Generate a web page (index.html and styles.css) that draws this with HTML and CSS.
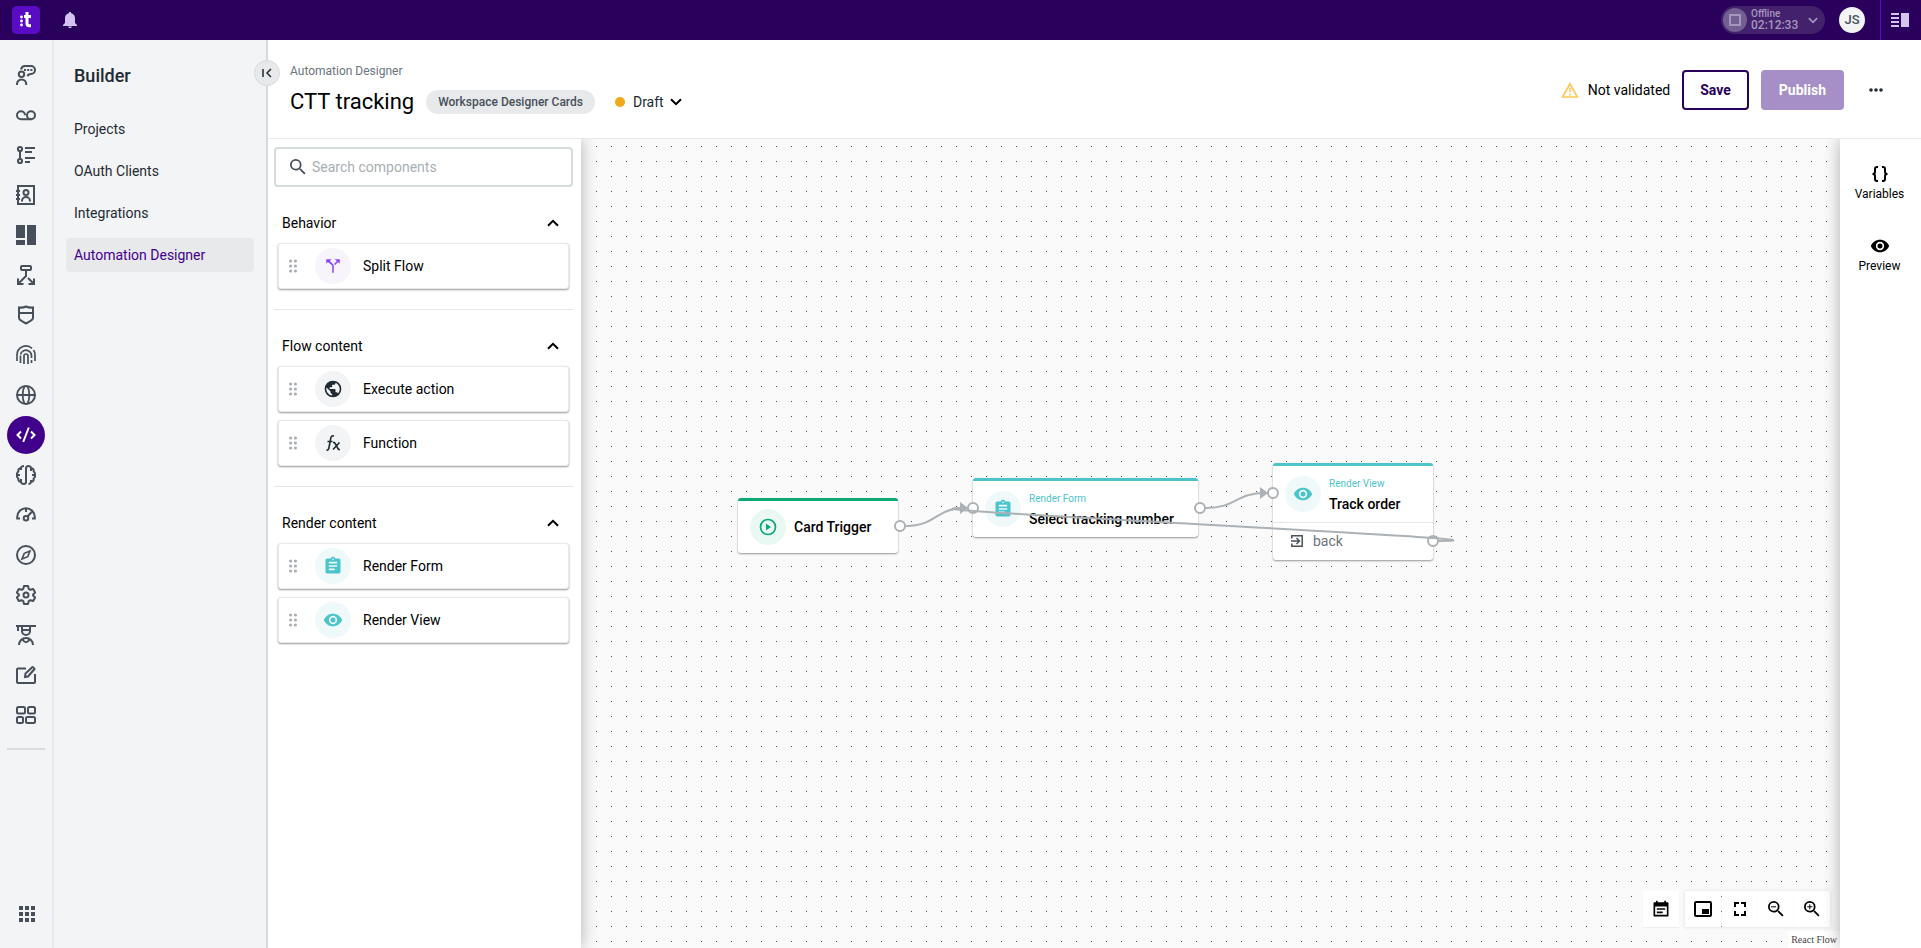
FILE: index.html
```html
<!DOCTYPE html>
<html lang="en">
<head>
<meta charset="utf-8">
<title>Automation Designer</title>
<meta name="viewport" content="width=device-width, initial-scale=1">
<link rel="stylesheet" href="styles.css">
</head>
<body>
<svg class="defs" width="0" height="0" aria-hidden="true">
  <defs>
    <symbol id="grip" viewBox="0 0 8 14"><g fill="#a9afb4"><circle cx="1.6" cy="2" r="1.6"/><circle cx="6.400" cy="2" r="1.6"/><circle cx="1.6" cy="7" r="1.6"/><circle cx="6.400" cy="7" r="1.6"/><circle cx="1.6" cy="12" r="1.6"/><circle cx="6.400" cy="12" r="1.6"/></g></symbol>
    <symbol id="up" viewBox="0 0 12 8"><path d="M1 6.8 6 1.8l5 5" fill="none" stroke="currentColor" stroke-width="2"/></symbol>
    <symbol id="down" viewBox="0 0 12 8"><path d="M1 1.2l5 5 5-5" fill="none" stroke="currentColor" stroke-width="2"/></symbol>
    <symbol id="form" viewBox="0 0 24 24"><path fill="currentColor" d="M19 3h-4.18C14.4 1.84 13.3 1 12 1s-2.4.84-2.82 2H5a2 2 0 0 0-2 2v14c0 1.100.9 2 2 2h14a2 2 0 0 0 2-2V5a2 2 0 0 0-2-2zm-7 0a1 1 0 1 1 0 2 1 1 0 0 1 0-2zm2 14H7v-2h7v2zm3-4H7v-2h10v2zm0-4H7V7h10v2z"/></symbol>
    <symbol id="eye" viewBox="0 0 24 24"><path fill="currentColor" d="M12 4.500C7 4.500 2.730 7.610 1 12c1.730 4.390 6 7.500 11 7.500s9.270-3.110 11-7.500c-1.730-4.390-6-7.500-11-7.500zM12 17a5 5 0 1 1 0-10 5 5 0 0 1 0 10zm0-8a3 3 0 1 0 0 6 3 3 0 0 0 0-6z"/></symbol>
    <symbol id="search" viewBox="3 3 18 18"><path fill="currentColor" d="M15.500 14h-.79l-.28-.27A6.470 6.470 0 0 0 16 9.500 6.500 6.500 0 1 0 9.500 16c1.610 0 3.090-.59 4.230-1.570l.27.28v.79l5 4.990L20.490 19l-4.990-5zm-6 0a4.500 4.500 0 1 1 0-9 4.500 4.500 0 0 1 0 9z"/></symbol>
  </defs>
</svg>

<header class="topbar">
  <a class="logo" href="#" aria-label="Home"><svg width="28" height="28" viewBox="0 0 28 28"><rect width="28" height="28" rx="5" fill="#5a0bc4"/><g fill="#fff"><circle cx="9.500" cy="11" r="1.400"/><circle cx="9.500" cy="15" r="1.400"/><circle cx="9.500" cy="19" r="1.400"/></g><path d="M15 6v11.500q0 2.300 2.300 2.300H19M12 10.500H19" fill="none" stroke="#fff" stroke-width="3"/></svg></a>
  <button class="bell" aria-label="Notifications"><svg width="14" height="16" viewBox="0 0 14 16"><path fill="#d2c3ef" d="M7 0c.8 0 1.200.5 1.200 1.300C10.700 1.800 12 3.700 12 6.200V11l2 2v1H0v-1l2-2V6.200c0-2.500 1.300-4.400 3.800-4.900C5.800.5 6.200 0 7 0zM5.200 14.500h3.600C8.800 15.500 8 16 7 16s-1.800-.5-1.800-1.500z"/></svg></button>
  <button class="status">
    <span class="status-dot"><svg width="12" height="12"><rect x="1" y="1" width="10" height="10" fill="none" stroke="#a596c0" stroke-width="2"/></svg></span>
    <span class="status-text"><span class="status-name">Offline</span><span class="status-time">02:12:33</span></span>
    <svg width="10" height="7" viewBox="0 0 12 8"><use href="#down"/></svg>
  </button>
  <button class="avatar">JS</button>
  <button class="panel-toggle" aria-label="Toggle panel"><svg width="18" height="14"><path d="M0 1h8M0 5h8M0 9h8M0 13h8" stroke="#d2c3ef" stroke-width="2"/><rect x="10" width="8" height="14" fill="#d2c3ef"/></svg></button>
</header>

<div class="shell">
  <nav class="rail" aria-label="Apps">
    <a href="#" aria-label="Conversations"><svg viewBox="0 0 20 20"><path d="M5 4.500C5.500 2 7 1 9 1h6a4 4 0 0 1 0 8q-3 0-3.500 2.300M1 20v-1a4.600 4.600 0 0 1 9.200 0v1"/><circle cx="5.500" cy="9.300" r="2.700"/><path d="M8 5h2M11.200 5h2M14.400 5h2" stroke-width="1.800"/></svg></a>
    <a href="#" aria-label="Voicemail"><svg viewBox="0 0 20 20"><path d="M9 10.300a4 4 0 1 0-4 4h10.500"/><circle cx="15" cy="10.300" r="4"/></svg></a>
    <a href="#" aria-label="Routing"><svg viewBox="0 0 20 20"><circle cx="4" cy="4" r="2.100"/><circle cx="4" cy="16" r="2.100"/><path d="M4 6.500v7M9 3h10M9 7h7M9 13h10M9 17h5"/></svg></a>
    <a href="#" aria-label="Contacts"><svg viewBox="0 0 20 20"><path d="M2 1h16v18H2zM0 6h4M0 10h4M0 14h4M6 16.500V16a4 4 0 0 1 8 0v.5"/><circle cx="10" cy="7.500" r="2.500"/></svg></a>
    <a href="#" aria-label="Dashboards"><svg viewBox="0 0 20 20"><path class="solid" d="M0 0h9v13H0zM0 15h9v5H0zM11 0h9v20h-9z"/></svg></a>
    <a href="#" aria-label="Flows"><svg viewBox="0 0 20 20"><rect x="5" y="1" width="10" height="4" rx="1"/><path d="M10 5v6l-7.500 7.500M12 13l5.500 5.500M2 13.500V19h5.500M18 13.500V19h-5.500"/></svg></a>
    <a href="#" aria-label="Security"><svg viewBox="0 0 20 20"><path d="M3 2.500q4 .5 7-1 3 1.500 7 1V13q0 2-7 5.500Q3 15 3 13zM3 8h14"/></svg></a>
    <a href="#" aria-label="Identity"><svg viewBox="0 0 20 20"><path d="M1 16v-6a9 9 0 0 1 15-6.700M17.500 5q1.500 2 1.500 5v6M4.500 18v-7.500M6.500 6.500a5.500 5.500 0 0 1 9 4V13M15.500 15v3M8 19v-8a2 2 0 0 1 4 0v8M4.700 9.500q0-1.500 1.500-3" stroke-width="1.700"/></svg></a>
    <a href="#" aria-label="Web"><svg viewBox="0 0 20 20"><circle cx="10" cy="10" r="9"/><path d="M1 10h18M9 1C6 5 6 15 9 19M11 1c3 4 3 14 0 18" stroke-width="1.800"/></svg></a>
    <a href="#" aria-label="Builder" class="active"><svg viewBox="0 0 20 20"><path d="M5 6.500 1.500 10 5 13.500M15 6.500l3.500 3.500-3.500 3.500M12.800 2.500 7.200 17"/></svg></a>
    <a href="#" aria-label="AI"><svg viewBox="0 0 20 20"><path d="M10 17V3.500Q10 1 12.300 1T15 3q3 .3 2.700 3.500Q19.500 8 19 10q.5 2-1.300 3.500Q18 16.500 15 17q-.5 2-2.500 2M8 1Q5.500 1 5 3 2 3.300 2.300 6.500.5 8 1 10q-.5 2 1.300 3.500Q2 16.500 5 17q.5 2 2.700 2Q10 19 10 17M1 10h3M19 10h-3M5 3v2M15 3v3M5 17v-3M15 17v-2"/></svg></a>
    <a href="#" aria-label="Performance"><svg viewBox="0 0 20 20"><path d="M4 13.500H1.200V12a8.800 8.800 0 0 1 17.600 0v1.500H16M10 3v4M11.500 11.500 16.500 6"/><circle cx="10" cy="13.300" r="2.300"/></svg></a>
    <a href="#" aria-label="Explore"><svg viewBox="0 0 20 20"><circle cx="10" cy="10" r="9"/><path d="M14 6l-2.300 5.700L6 14l2.300-5.700z" stroke-width="1.700"/></svg></a>
    <a href="#" aria-label="Settings"><svg viewBox="0 0 20 20"><path d="M8 1h4l.7 2.800 1.700 1 2.800-.8 2 3.500-2.100 2v1l2.100 2-2 3.500-2.800-.8-1.700 1L12 19H8l-.7-2.800-1.700-1-2.800.8-2-3.500 2.100-2v-1l-2.100-2 2-3.500 2.800.8 1.700-1z" stroke-linejoin="round"/><circle cx="10" cy="10" r="2.500"/></svg></a>
    <a href="#" aria-label="Learning"><svg viewBox="0 0 20 20"><path d="M0 1h20M2 1v5M6 1v5a4 4 0 0 0 8 0V1M6 5h8M3 20a7 7 0 0 1 14 0M6.500 14.500q3.500 5.500 7 0"/></svg></a>
    <a href="#" aria-label="Notes"><svg viewBox="0 0 20 20"><path d="M10 3.500H2q-1 0-1 1V17q0 1 1 1h16q1 0 1-1V9M9 12l.5-3.500 7-6.500q1 0 2 2L12 11.500z"/></svg></a>
    <a href="#" aria-label="Widgets"><svg viewBox="0 0 20 20"><rect x="1" y="2" width="8" height="6.500" rx="1.500"/><rect x="12" y="2" width="7" height="6.500" rx="1.500"/><rect x="1" y="12" width="6" height="6" rx="1.500"/><rect x="10" y="12" width="9" height="6" rx="1.500"/></svg></a>
    <hr class="rail-line">
    <a href="#" aria-label="All apps" class="all-apps"><svg viewBox="0 0 20 20"><path class="solid" d="M3 2h4v4H3zM9 2h4v4H9zM15 2h4v4h-4zM3 8h4v4H3zM9 8h4v4H9zM15 8h4v4h-4zM3 14h4v4H3zM9 14h4v4H9zM15 14h4v4h-4z"/></svg></a>
  </nav>

  <aside class="sidebar">
    <h2>Builder</h2>
    <ul>
      <li><a href="#">Projects</a></li>
      <li><a href="#">OAuth Clients</a></li>
      <li><a href="#">Integrations</a></li>
      <li><a href="#" class="current">Automation Designer</a></li>
    </ul>
    <button class="collapse" aria-label="Collapse menu"><svg width="10" height="10"><path d="M1 1v8M9 1 5 5l4 4" fill="none" stroke="#1f2a33" stroke-width="1.500"/></svg></button>
  </aside>

  <main class="main">
    <header class="page-head">
      <div class="titles">
        <a class="crumb" href="#">Automation Designer</a>
        <div class="title-row">
          <h1>CTT tracking</h1>
          <span class="chip">Workspace Designer Cards</span>
          <button class="draft"><span class="dot"></span>Draft<svg width="12" height="8"><use href="#down"/></svg></button>
        </div>
      </div>
      <div class="actions">
        <span class="validation"><svg width="18" height="16" viewBox="0 0 18 16"><path d="M9 1.800 16.400 15H1.600z" fill="none" stroke="#ffc857" stroke-width="1.700"/><path d="M9 6v4M9 11.500v2" stroke="#ffc857" stroke-width="1.700"/></svg>Not validated</span>
        <button class="btn save">Save</button>
        <button class="btn publish">Publish</button>
        <button class="more" aria-label="More"><svg width="14" height="4"><g fill="#1f2a33"><circle cx="2" cy="2" r="1.800"/><circle cx="7" cy="2" r="1.800"/><circle cx="12" cy="2" r="1.800"/></g></svg></button>
      </div>
    </header>

    <div class="workspace">
      <section class="palette">
        <label class="search"><svg width="16" height="16"><use href="#search"/></svg><input type="text" placeholder="Search components" aria-label="Search components"></label>
        <section class="group">
          <button class="group-head">Behavior<svg width="12" height="8"><use href="#up"/></svg></button>
          <div class="item"><svg width="8" height="14"><use href="#grip"/></svg><span class="disc violet"><svg width="18" height="18" viewBox="0 0 24 24"><path fill="currentColor" d="M3 3h7L7.800 5.200l5.200 5.300V21h-2v-9.600L5.200 6.800 3 9zM14 3h7v6l-2.200-2.200-3.900 3.900-1.500-1.500 3.900-3.900z"/></svg></span>Split Flow</div>
        </section>
        <section class="group">
          <button class="group-head">Flow content<svg width="12" height="8"><use href="#up"/></svg></button>
          <div class="item"><svg width="8" height="14"><use href="#grip"/></svg><span class="disc gray"><svg width="20" height="20" viewBox="0 0 24 24"><path fill="currentColor" d="M12 2a10 10 0 1 0 0 20 10 10 0 0 0 0-20zm-1 17.930A7.990 7.990 0 0 1 4.210 10.210L9 15v1a2 2 0 0 0 2 2v1.930zm6.900-2.540A2 2 0 0 0 16 16h-1v-3a1 1 0 0 0-1-1H8v-2h2a1 1 0 0 0 1-1V7h2a2 2 0 0 0 2-2v-.41a7.990 7.990 0 0 1 2.900 12.800z"/></svg></span>Execute action</div>
          <div class="item"><svg width="8" height="14"><use href="#grip"/></svg><span class="disc gray"><svg width="16" height="18" viewBox="0 0 16 18"><path d="M1.500 16q2 .5 2.500-2.500L5.800 4Q6.300 1.300 9 2M2.500 7.500h5M8 8.500h1.500l4 7H15M14.500 8.500l-6.500 7" fill="none" stroke="currentColor" stroke-width="1.600"/></svg></span>Function</div>
        </section>
        <section class="group">
          <button class="group-head">Render content<svg width="12" height="8"><use href="#up"/></svg></button>
          <div class="item"><svg width="8" height="14"><use href="#grip"/></svg><span class="disc teal"><svg width="20" height="20"><use href="#form"/></svg></span>Render Form</div>
          <div class="item"><svg width="8" height="14"><use href="#grip"/></svg><span class="disc teal"><svg width="20" height="20"><use href="#eye"/></svg></span>Render View</div>
        </section>
      </section>

      <section class="canvas" aria-label="Flow">
        <svg class="layer" width="100%" height="100%"><defs><pattern id="dots" x="0" y="7" width="15" height="15" patternUnits="userSpaceOnUse"><rect width="1" height="1" fill="#4c4c52"/></pattern></defs><rect x="1" width="100%" height="100%" fill="url(#dots)"/></svg>

        <article class="node trigger"><div class="node-main"><span class="disc green"><svg width="18" height="18" viewBox="0 0 18 18"><circle cx="9" cy="9" r="7.500" fill="none" stroke="currentColor" stroke-width="1.700"/><path d="M7 5.500v7L12 9z" fill="currentColor"/></svg></span><strong>Card Trigger</strong></div></article>
        <article class="node form"><div class="node-main"><span class="disc teal"><svg width="20" height="20"><use href="#form"/></svg></span><div class="node-text"><small>Render Form</small><strong>Select tracking number</strong></div></div></article>
        <article class="node view"><div class="node-main"><span class="disc teal"><svg width="20" height="20"><use href="#eye"/></svg></span><div class="node-text"><small>Render View</small><strong>Track order</strong></div></div><div class="node-exit"><svg width="14" height="14" viewBox="0 0 14 14"><path d="M1.800 4.500V1.800h10.400v10.400H1.800V9.500M1 7h8M6.500 4 9.500 7l-3 3" fill="none" stroke="#4a525a" stroke-width="1.500"/></svg>back</div></article>

        <svg class="layer edges" width="100%" height="100%">
          <g fill="none" stroke="#abb1b5" stroke-width="2">
            <path d="M325 387C355 387 355 369 384 369"/>
            <path d="M625 369C655 369 655 354 684 354"/>
            <g fill="#fff"><circle cx="319" cy="387" r="5"/><circle cx="392" cy="369" r="5"/><circle cx="619" cy="369" r="5"/><circle cx="692" cy="354" r="5"/><circle cx="852" cy="402" r="5"/></g>
            <path d="M858 402C982 402 262 369 386 369"/>
          </g>
          <path d="M379 363v12l8-6zM679 348v12l8-6z" fill="#abb1b5"/>
        </svg>

        <div class="controls">
          <button aria-label="Changelog"><svg width="20" height="20" viewBox="0 0 24 24"><path d="M4 5h16v15H4z" fill="none" stroke="#000" stroke-width="2" stroke-linejoin="round"/><path d="M4 5h16v4H4zM6 2h2v3H6zM16 2h2v3h-2zM7 11h10v2H7zM7 15h7v2H7z"/></svg></button>
          <div class="control-group">
            <button class="minimap" aria-label="Mini map"><svg width="24" height="24" viewBox="0 0 24 24"><rect x="4" y="5" width="16" height="14" rx="1" fill="none" stroke="#000" stroke-width="2"/><path d="M11 12h7v5h-7z"/></svg></button>
            <button aria-label="Fit view"><svg width="18" height="18" viewBox="3 3 18 18"><path d="M8 14H6v5h5v-2H8zM6 10h2V7h3V5H6zM16 17h-3v2h5v-5h-2zM13 5v2h3v3h2V5z"/></svg></button>
            <button aria-label="Zoom out"><svg width="16" height="16"><use href="#search"/><path d="M3 5.800h5" stroke="#000" stroke-width="1"/></svg></button>
            <button aria-label="Zoom in"><svg width="16" height="16"><use href="#search"/><path d="M3.300 5.800h5M5.800 3.300v5" stroke="#000" stroke-width="1"/></svg></button>
          </div>
        </div>
        <a class="attribution" href="#">React Flow</a>
      </section>

      <aside class="tools">
        <button><svg width="20" height="20" viewBox="0 0 20 20"><path d="M8 3H7Q5 3 5 5v3q0 2-2.500 2Q5 10 5 12v3q0 2 2 2h1M12 3h1q2 0 2 2v3q0 2 2.500 2-2.500 0-2.500 2v3q0 2-2 2h-1" fill="none" stroke="#000" stroke-width="2"/></svg>Variables</button>
        <button><svg width="20" height="20"><use href="#eye"/></svg>Preview</button>
      </aside>
    </div>
  </main>
</div>
</body>
</html>
```
FILE: styles.css
```css
* { box-sizing: border-box; }
body {
  margin: 0;
  height: 100vh;
  display: flex;
  flex-direction: column;
  overflow: hidden;
  font: 14px/20px Roboto, "Liberation Sans", sans-serif;
  color: #000;
  background: #fff;
}
button { font: inherit; color: inherit; border: 0; padding: 0; background: none; cursor: pointer; }
a { color: inherit; text-decoration: none; }
svg { flex: none; display: block; }
.defs { position: absolute; }

.topbar { flex: none; height: 40px; display: flex; align-items: center; background: #29005b; }
.logo { margin-left: 12px; }
.bell { margin-left: 23px; }
.status {
  margin-left: auto;
  display: flex;
  align-items: center;
  width: 104px;
  height: 28px;
  padding: 2px;
  border-radius: 14px;
  background: #43216d;
  color: #a596c0;
  text-align: left;
}
.status-dot { display: grid; place-items: center; width: 24px; height: 24px; border-radius: 50%; background: #716091; }
.status-text { flex: 1; margin-left: 4px; display: flex; flex-direction: column; }
.status-name { font-size: 10px; font-weight: 500; line-height: 11px; }
.status-time { font-size: 12px; font-weight: 500; line-height: 13px; }
.status > svg { margin-right: 5px; }
.avatar { width: 26px; height: 26px; margin: 0 15px 0 14px; border-radius: 50%; background: #f3f4f6; color: #47505a; font-size: 13px; font-weight: 500; }
.panel-toggle { display: flex; align-items: center; padding-left: 10px; width: 41px; height: 40px; border-left: 1px solid #5a0bc4; }

.shell { flex: 1; min-height: 0; display: flex; }
.rail {
  flex: none;
  width: 54px;
  display: flex;
  flex-direction: column;
  align-items: center;
  padding-top: 16px;
  border-right: 2px solid #e8e9eb;
  background: #f3f4f6;
}
.rail a { display: grid; place-items: center; width: 38px; height: 38px; margin-bottom: 2px; border-radius: 50%; color: #47505a; }
.rail svg { width: 20px; height: 20px; fill: none; stroke: currentColor; stroke-width: 2; }
.rail .solid { fill: currentColor; stroke: none; }
.rail .active { background: #41008b; color: #fff; }
.rail-line { width: 38px; height: 2px; margin: 12px 0 0; border: 0; background: #dadcde; }
.rail .all-apps { margin: auto 0 15px; }

.sidebar { flex: none; position: relative; width: 214px; padding: 24px 12px; border-right: 2px solid #d5d9dd; background: #f3f4f6; color: #1f2a33; }
.sidebar h2 { margin: 0 0 20px; padding-left: 8px; font-size: 18px; line-height: 24px; font-weight: 500; }
.sidebar ul { list-style: none; margin: 0; padding: 4px 0 0; display: grid; gap: 8px; }
.sidebar li a { display: block; padding: 7px 8px; border-radius: 4px; }
.sidebar .current { background: #e8e9eb; color: #41008b; }
.collapse { position: absolute; z-index: 5; top: 20px; right: -14px; display: grid; place-items: center; width: 26px; height: 26px; border: 1px solid #d5d9dd; border-radius: 50%; background: #e8e9eb; }

.main { flex: 1; min-width: 0; display: flex; flex-direction: column; }
.page-head { flex: none; height: 99px; display: flex; align-items: center; justify-content: space-between; padding: 2px 38px 0 22px; border-bottom: 1px solid #e8e9eb; }
.crumb { display: block; font-size: 12px; line-height: 16px; color: #6b747d; }
.title-row { display: flex; align-items: center; height: 32px; margin-top: 7px; }
.title-row h1 { margin: 0 12px 0 0; font-size: 22px; line-height: 32px; font-weight: 400; }
.chip { padding: 2px 12px; border-radius: 12px; background: #e8e9eb; color: #47505a; font-size: 12px; font-weight: 500; }
.draft { display: flex; align-items: center; gap: 8px; margin-left: 20px; color: #1f2a33; }
.draft svg { margin-left: -2px; color: #000; }
.dot { width: 10px; height: 10px; border-radius: 50%; background: #f0a818; }
.actions { display: flex; align-items: center; gap: 12px; }
.validation { display: flex; align-items: center; gap: 9px; }
.btn { height: 40px; padding: 0 16px; border: 2px solid #29005b; border-radius: 4px; font-weight: 700; color: #29005b; }
.publish { border-color: #a68fc6; background: #a68fc6; color: #fff; }
.more { width: 14px; margin-left: 13px; }

.workspace { flex: 1; min-height: 0; display: flex; }
.palette { flex: none; position: relative; z-index: 2; width: 313px; padding: 8px 8px 0 6px; background: #fff; box-shadow: 0 0 16px rgba(0, 0, 0, .3); clip-path: inset(0 -20px 0 0); }
.search { display: flex; align-items: center; gap: 6px; height: 40px; padding: 0 14px; border: 2px solid #d5dadd; border-radius: 4px; color: #47505a; }
.search input { flex: 1; min-width: 0; border: 0; padding: 0; outline: 0; background: none; font: inherit; }
.search input::placeholder { color: #a9afb4; }
.group { display: flex; flex-direction: column; gap: 8px; padding: 16px 4px 20px; border-bottom: 1px solid #e3e5e7; }
.group:last-child { border-bottom: 0; }
.group-head { display: flex; align-items: center; justify-content: space-between; height: 40px; margin-bottom: -8px; padding: 0 10px 0 4px; }
.item { display: flex; align-items: center; height: 46px; padding-left: 10px; border: 1px solid #e8e9eb; border-radius: 3px; background: #fff; box-shadow: 0 1px 2px rgba(0, 0, 0, .4); }
.item .disc { margin: 0 12px 0 18px; }
.disc { flex: none; display: grid; place-items: center; width: 36px; height: 36px; border-radius: 50%; }
.violet { background: #f7f4fc; color: #8f3ff5; }
.gray { background: #f3f4f6; color: #1f2a33; }
.teal { background: #eff9fa; color: #4cc4cc; }
.green { background: #eaf8f3; color: #09ab72; }

.canvas { flex: 1; position: relative; min-width: 0; background: #fafafa; }
.layer { position: absolute; inset: 0; }
.edges { pointer-events: none; }
.node { position: absolute; border-top: 3px solid #4cc4cc; border-radius: 3px; background: #fff; box-shadow: 0 1px 2px rgba(0, 0, 0, .4); }
.node strong { font-weight: 500; white-space: nowrap; }
.node-main { display: flex; align-items: center; gap: 8px; height: 56px; padding: 0 12px; }
.node-text { display: grid; padding-top: 2px; }
.node small { font-size: 10px; line-height: 18px; color: #4cc4cc; }
.node-text strong { line-height: 22px; }
.trigger { left: 157px; top: 359px; width: 160px; border-color: #09ab72; }
.trigger .node-main { height: 52px; }
.form { left: 392px; top: 339px; width: 225px; }
.view { left: 692px; top: 324px; width: 160px; }
.node-exit { display: flex; align-items: center; gap: 9px; height: 38px; padding: 0 0 2px 17px; border-top: 1px solid #e3e5e7; color: #6b747d; }
.controls { position: absolute; right: 10px; bottom: 21px; display: flex; gap: 6px; }
.controls button { display: grid; place-items: center; width: 36px; height: 36px; background: #fff; box-shadow: 0 1px 1px #eee; }
.control-group { display: flex; box-shadow: 0 0 4px rgba(0, 0, 0, .1); }
.controls .minimap { margin-right: 1px; }
.attribution { position: absolute; right: 0; bottom: 0; padding: 3px 3px 2px; background: #fff; color: #444; font: 10px/12px "Liberation Serif", serif; }

.tools { flex: none; position: relative; z-index: 2; width: 81px; padding: 25px 2px 0 0; display: flex; flex-direction: column; gap: 32px; background: #fff; box-shadow: 0 0 16px rgba(0, 0, 0, .3); clip-path: inset(0 0 0 -20px); }
.tools button { display: flex; flex-direction: column; align-items: center; font-size: 12px; }
```
